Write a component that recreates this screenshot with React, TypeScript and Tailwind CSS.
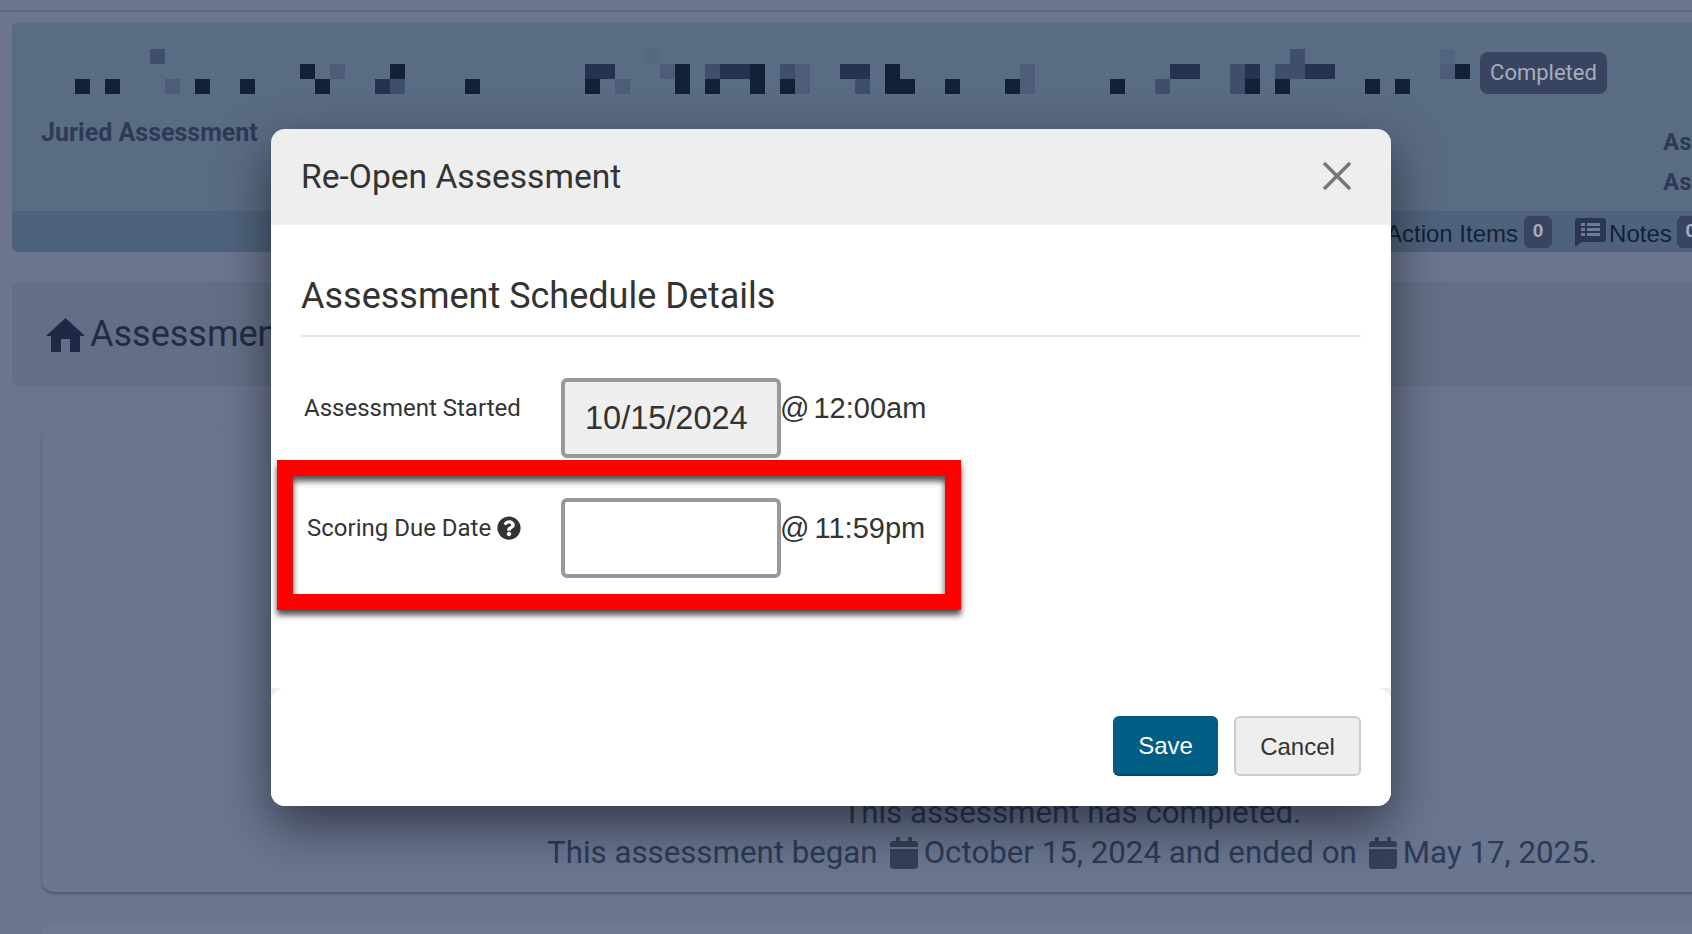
import { FaCalendar, FaQuestionCircle } from "react-icons/fa";

// [col, row, colour] for the blurred title, cols are 15px from x=75
const dark = "#12203a";
const mid = "#253350";
const soft = "#3f4f6b";
const faint = "#4d5d78";
const mosaic: [number, number, string][] = [
  [0, 2, dark], [2, 2, dark], [5, 0, soft], [6, 2, faint], [8, 2, dark], [11, 2, dark],
  [15, 1, dark], [16, 2, dark], [17, 1, faint], [21, 1, dark], [21, 2, soft], [20, 2, mid], [26, 2, dark],
  [34, 1, mid], [35, 1, mid], [34, 2, dark], [36, 2, faint], [38, 0, "#566780"], [39, 1, faint],
  [40, 1, dark], [40, 2, dark], [42, 1, soft], [43, 1, mid], [44, 1, mid], [45, 1, dark], [42, 2, dark], [45, 2, dark],
  [47, 1, soft], [48, 1, faint], [47, 2, dark], [48, 2, faint],
  [51, 1, mid], [52, 1, mid], [52, 2, soft], [54, 1, dark], [54, 2, dark], [55, 2, dark], [58, 2, dark],
  [62, 2, dark], [63, 1, faint], [63, 2, faint], [69, 2, dark], [73, 1, mid], [74, 1, mid], [72, 2, soft],
  [77, 1, soft], [77, 2, soft], [78, 1, mid], [78, 2, dark], [81, 0, soft], [80, 1, soft], [81, 1, soft],
  [82, 1, mid], [83, 1, mid], [80, 2, dark], [86, 2, dark], [88, 2, dark],
  [91, 0, "#53647e"], [91, 1, faint], [92, 1, dark],
];

function Mosaic() {
  return (
    <svg width="1395" height="45" className="shrink-0">
      {mosaic.map(([c, r, fill]) => (
        <rect key={`${c}-${r}`} x={c * 15} y={r * 15} width="15" height="15" fill={fill} />
      ))}
    </svg>
  );
}

export default function App() {
  return (
    <div className="relative w-[1692px] h-[934px] overflow-hidden bg-[#6b7590] font-['Roboto',sans-serif] text-[#1e2a45]">
      {/* page behind the dialog, already dimmed */}
      <div className="w-[2136px]">
        <div className="h-[10px]" />
        <div className="h-[2px] bg-[#5f6880]" />
        <div className="px-3 pt-[10px]">
          <div className="h-[230px] rounded-md bg-[#5a6b84] flex flex-col overflow-hidden">
            <div className="flex pl-[63px] pt-[27px] h-[190px]">
              <div>
                <Mosaic />
                <div className="-ml-[34px] mt-[25px] text-[25px] leading-[28px] font-bold text-[#2c3a55]">
                  Juried Assessment
                </div>
              </div>
              <span className="ml-[10px] mt-[3px] h-[42px] w-[127px] shrink-0 rounded-lg bg-[#394560] text-[#a4adbd] text-[22px] pb-[2px] flex items-center justify-center">
                Completed
              </span>
              <div className="ml-[56px] mt-[73px] text-[24px] leading-[40px] font-bold text-[#2c3a55]">
                <div>Assessors</div>
                <div>Assigned</div>
              </div>
            </div>
            <div className="flex-1 bg-[#4f627c] flex items-center pl-[1374px] font-['Liberation_Sans',sans-serif] text-[24px] text-[#14203a]">
              <span className="mt-[5px]">Action Items</span>
              <span className="ml-[6px] w-[28px] h-[32px] rounded-md bg-[#394560] text-[#a4adbd] text-[19px] font-bold flex items-center justify-center">
                0
              </span>
              <svg width="31" height="29" viewBox="0 0 31 29" className="ml-[23px] mt-[1px]">
                <path d="M3 0h25a3 3 0 0 1 3 3v18a3 3 0 0 1-3 3H7l-7 5V3a3 3 0 0 1 3-3z" fill="#2a3754" />
                <path d="M6 5h4v3H6zM12 5h13v3H12zM6 10h4v3H6zM12 10h13v3H12zM6 15h4v3H6zM12 15h13v3H12z" fill="#6d7c94" />
              </svg>
              <span className="ml-[3px] mt-[5px]">Notes</span>
              <span className="ml-[5px] w-[28px] h-[32px] rounded-md bg-[#394560] text-[#a4adbd] text-[19px] font-bold flex items-center justify-center">
                0
              </span>
            </div>
          </div>

          <div className="mt-[30px] h-[104px] rounded-md bg-[#646f87] flex items-center pl-[34px]">
            <svg width="39" height="34" viewBox="0 0 39 34" className="shrink-0 mt-[2px]">
              <path d="M19.500 0 39 18h-5v16H24V21h-9v13H5V18H0z" fill="#1e2a45" />
            </svg>
            <span className="ml-[5px] text-[36px] text-[#1f2c48]">Assessments</span>
          </div>

          <div className="mt-[41px] ml-[30px] w-[2060px] h-[465px] rounded-xl bg-[#6a7590] shadow-[0_2px_3px_rgba(40,50,70,0.45)] flex flex-col items-center justify-end pb-[19px] text-[31.25px] leading-[40px] text-[#2c3a55]">
            <div>This assessment has completed.</div>
            <div className="flex items-center">
              This assessment began
              <FaCalendar className="ml-[10px] mr-[4px] text-[32px] text-[#354159]" />
              October 15, 2024 and ended on
              <FaCalendar className="ml-[10px] mr-[4px] text-[32px] text-[#354159]" />
              May 17, 2025.
            </div>
          </div>

          <div className="mt-[30px] ml-[30px] h-[60px] rounded-xl bg-[#6e7a94]" />
        </div>
      </div>

      {/* dialog */}
      <div className="absolute left-[271px] top-[129px] w-[1120px] h-[677px] rounded-[14px] bg-[#eeeeee] shadow-[0_20px_50px_rgba(0,0,0,0.5)] flex flex-col text-[#333333]">
        <div className="h-[96px] shrink-0 flex items-center justify-between pl-[30px] pr-[40px]">
          <h2 className="text-[33.6px] font-normal">Re-Open Assessment</h2>
          <svg width="28" height="28" viewBox="0 0 28 28" className="-mt-[3px]">
            <path d="M1 1l26 26M27 1 1 27" stroke="#777777" strokeWidth="3.500" fill="none" />
          </svg>
        </div>
        <div className="h-[463px] shrink-0 bg-white px-[30px] pt-[49px]">
          <h3 className="text-[36px] leading-[44px] font-normal">Assessment Schedule Details</h3>
          <div className="mt-[17px] h-[2px] bg-[#e5e5e5]" />
          <div className="mt-[41px] flex">
            <label className="w-[260px] shrink-0 pl-[3px] pt-[15px] text-[24px] leading-[30px]">Assessment Started</label>
            <div className="w-[220px] h-[80px] shrink-0 rounded-[6px] border-[4px] border-[#999999] bg-[#efefef] pl-[20px] flex items-center font-['Liberation_Sans',sans-serif] text-[32.5px]">
              10/15/2024
            </div>
            <span className="-ml-[1px] pt-[12px] leading-[36px] font-['Liberation_Sans',sans-serif] text-[29px] [word-spacing:-4px]">@ 12:00am</span>
          </div>
          <div className="mt-[40px] flex">
            <label className="w-[260px] shrink-0 pl-[6px] pt-[15px] text-[24px] leading-[30px] flex items-start">
              Scoring Due Date
              <FaQuestionCircle className="ml-[6px] mt-[3px] text-[24px]" />
            </label>
            <div className="w-[220px] h-[80px] shrink-0 rounded-[6px] border-[4px] border-[#999999] bg-white" />
            <span className="-ml-[1px] pt-[12px] leading-[36px] font-['Liberation_Sans',sans-serif] text-[29px] [word-spacing:-3px]">@ 11:59pm</span>
          </div>
        </div>
        <div className="flex-1 rounded-[14px] bg-white flex justify-end items-start gap-[16px] pt-[28px] pr-[30px] font-['Liberation_Sans',sans-serif] text-[24px]">
          <button className="w-[105px] h-[60px] pt-[2px] rounded-[6px] bg-[#005e85] border-b-2 border-[#004a69] text-white">Save</button>
          <button className="w-[127px] h-[60px] pt-[2px] rounded-[6px] bg-[#eeeeee] border-2 border-[#cccccc] text-[#333333]">Cancel</button>
        </div>
      </div>

      {/* red annotation */}
      <div className="absolute left-[277px] top-[460px] w-[684px] h-[150px] border-[16px] border-[#ff0000] shadow-[0_5px_6px_rgba(0,0,0,0.7),inset_0_5px_6px_rgba(0,0,0,0.7)]" />
    </div>
  );
}
